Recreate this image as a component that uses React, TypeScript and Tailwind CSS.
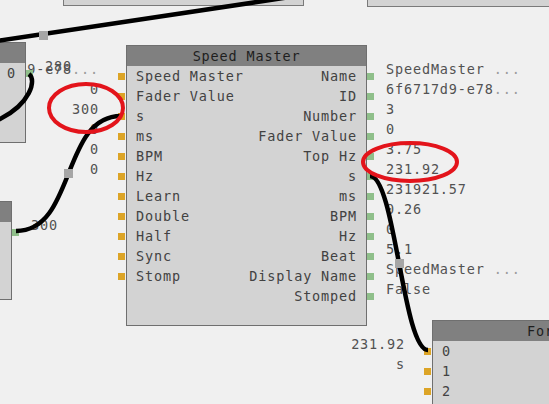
import type { ReactNode } from "react";

type Port = { label?: string; value?: ReactNode };

interface NodeProps {
  x: number;
  y: number;
  width: number;
  height: number;
  title?: string;
  inputs?: Port[];
  outputs?: Port[];
}

// the value columns sit beside the node box; they are this wide
const SIDE = 180;

function Val({ text, more, gap = true }: { text: string; more?: boolean; gap?: boolean }) {
  return (
    <>
      {text}
      {more && <span className="text-[#9c9c9c]">{gap ? " ..." : "..."}</span>}
    </>
  );
}

function Node({ x, y, width, height, title, inputs = [], outputs = [] }: NodeProps) {
  const n = Math.max(inputs.length, outputs.length);
  const rows = Array.from({ length: n });
  return (
    <div className="absolute flex items-start" style={{ left: x - SIDE - 27, top: y }}>
      {/* input values, each 7px above its row */}
      <div className="flex w-[180px] flex-col items-end pt-[14px] text-[#525252] mr-[27px]">
        {rows.map((_, i) => (
          <div key={i} className="h-[20px] whitespace-nowrap leading-[20px]">{inputs[i]?.value}</div>
        ))}
      </div>

      <div className="relative flex shrink-0 flex-col border border-[#6f6f6f] bg-[#d3d3d3]" style={{ width, height }}>
        <div className="h-[20px] shrink-0 bg-[#808080] text-center leading-[20px] text-[#1e1e1e] whitespace-nowrap">
          {title}
        </div>
        {rows.map((_, i) => (
          <div key={i} className="relative flex h-[20px] shrink-0 items-center justify-between px-[9px] leading-[20px] text-[#424242]">
            <span className="whitespace-nowrap">{inputs[i]?.label}</span>
            <span className="whitespace-nowrap">{outputs[i]?.label}</span>
            {inputs[i] && <span className="absolute left-[-9px] top-[6.5px] h-[7px] w-[7px] bg-[#dca426]" />}
            {outputs[i] && <span className="absolute right-[-8px] top-[6.5px] h-[7px] w-[7px] bg-[#8fbf8a]" />}
          </div>
        ))}
      </div>

      {/* output values */}
      <div className="ml-[19px] flex flex-col pt-[14px] text-[#525252]">
        {rows.map((_, i) => (
          <div key={i} className="h-[20px] whitespace-nowrap leading-[20px]">{outputs[i]?.value}</div>
        ))}
      </div>
    </div>
  );
}

export default function App() {
  return (
    <div className="relative h-[404px] w-[549px] overflow-hidden bg-[#f0f0f0] font-['DejaVu_Sans_Mono','Liberation_Mono',monospace] text-[13.5px] tracking-[0.85px]">
      {/* partly visible nodes at the top */}
      <div className="absolute left-[63px] top-[-50px] h-[56px] w-[241px] border border-[#7a7a7a] bg-[#d3d3d3]" />
      <div className="absolute left-[367px] top-[-50px] h-[57px] w-[250px] border border-[#7a7a7a] bg-[#d3d3d3]" />

      <Node
        x={126}
        y={45}
        width={241}
        height={281}
        title="Speed Master"
        inputs={[
          { label: "Speed Master", value: <Val text="6f6717d9-e78" more gap={false} /> },
          { label: "Fader Value", value: "0" },
          { label: "s", value: "300" },
          { label: "ms", value: "0" },
          { label: "BPM", value: "0" },
          { label: "Hz", value: "0" },
          { label: "Learn" },
          { label: "Double" },
          { label: "Half" },
          { label: "Sync" },
          { label: "Stomp" },
        ]}
        outputs={[
          { label: "Name", value: <Val text="SpeedMaster" more /> },
          { label: "ID", value: <Val text="6f6717d9-e78" more gap={false} /> },
          { label: "Number", value: "3" },
          { label: "Fader Value", value: "0" },
          { label: "Top Hz", value: "3.75" },
          { label: "s", value: "231.92" },
          { label: "ms", value: "231921.57" },
          { label: "BPM", value: "0.26" },
          { label: "Hz", value: "0" },
          { label: "Beat", value: "5.1" },
          { label: "Display Name", value: <Val text="SpeedMaster" more /> },
          { label: "Stomped", value: "False" },
        ]}
      />

      <Node x={-120} y={42} width={146} height={101} outputs={[{ label: "0", value: "280" }]} />
      <Node x={-150} y={201} width={162} height={99} outputs={[{ value: "300" }]} />
      <Node
        x={432}
        y={320}
        width={253}
        height={140}
        title="Formula"
        inputs={[{ label: "0", value: "231.92" }, { label: "1", value: "s" }, { label: "2" }]}
      />

      <svg className="pointer-events-none absolute inset-0" width={549} height={404}>
        <g fill="none" stroke="#000" strokeWidth={4.5}>
          <path d="M-10 42 C90 27 190 12 290 -3" />
          <path d="M29 74 C37 80 30 104 0 119 L-10 124" />
          <path d="M16 231 C76 231 61 116 121 116" />
          <path d="M370 176 C395 176 403 350 428 350" />
        </g>
        <g fill="#a6a6a6">
          <rect x={39} y={31} width={9} height={9} />
          <rect x={64} y={169} width={9} height={9} />
          <rect x={395} y={259} width={9} height={9} />
        </g>
        <g fill="none" stroke="#e3141b" strokeWidth={4}>
          <ellipse cx={86} cy={108} rx={37} ry={24} />
          <ellipse cx={410} cy={162} rx={47} ry={19} />
        </g>
      </svg>
    </div>
  );
}
